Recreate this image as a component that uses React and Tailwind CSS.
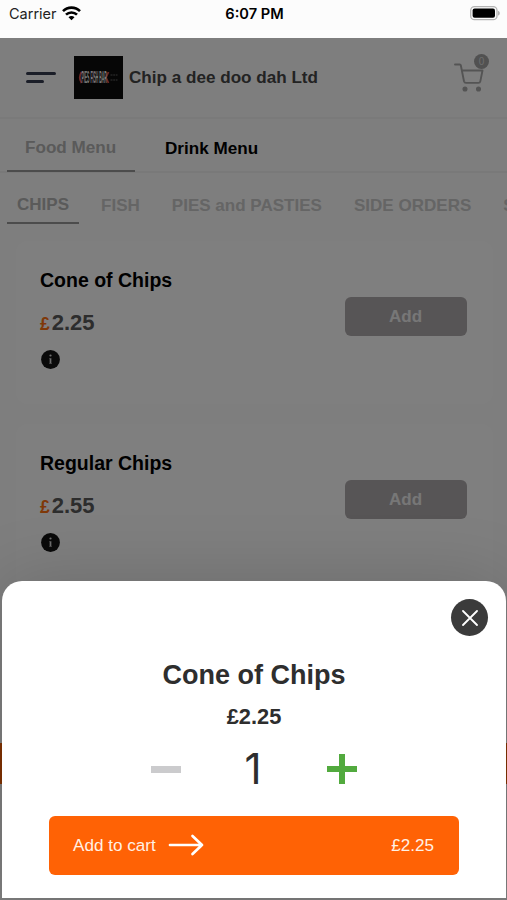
import React, { useState } from 'react';

const CATEGORIES = ['FISH', 'PIES and PASTIES', 'SIDE ORDERS', 'SAUCES'];

const PRODUCTS = [
  { id: 1, name: 'Cone of Chips', price: '2.25' },
  { id: 2, name: 'Regular Chips', price: '2.55' },
];

const StatusBar = () => (
  <div className="h-[38px] shrink-0 bg-[#fcfcfc] grid grid-cols-3 items-start pt-[5px] pl-[9px] pr-[7px] font-['Inter',sans-serif] text-black leading-[18px]">
    <div className="flex items-center gap-[5px] text-[14.5px] text-[#222]">
      Carrier
      <svg className="-mt-[2px]" width="19" height="15" viewBox="0 0 19 15" fill="none" stroke="#000" strokeWidth="2.6">
        <path d="M1 5.2a12 12 0 0 1 17 0" />
        <path d="M4 8.7a7.8 7.8 0 0 1 11 0" />
        <path d="M9.5 14.2 6.5 11.2a4.2 4.2 0 0 1 6 0z" fill="#000" stroke="none" />
      </svg>
    </div>
    <div className="text-center text-[14.6px] font-semibold whitespace-nowrap">6:07 PM</div>
    <div className="flex justify-end pt-px">
      <svg width="30" height="15" viewBox="0 0 30 15">
        <rect x="0.7" y="0.7" width="26.3" height="13" rx="3.8" fill="#fcfcfc" stroke="#b4b4b4" strokeWidth="1.3" />
        <rect x="2.6" y="2.6" width="22.4" height="9.2" rx="2" fill="#000" />
        <path d="M28 4.8c2.4.7 2.4 4.1 0 4.8z" fill="#b4b4b4" />
      </svg>
    </div>
  </div>
);

const ShopLogo = () => (
  <div className="ml-[18px] w-[49px] h-[43px] bg-[#0c0c0c] flex items-center justify-center">
    <svg width="43" height="20" viewBox="0 0 43 20">
      <path d="M4.5 4Q1 9.500 4.5 15M31.500 4l-2.500 5.500 2.500 5.500" fill="none" stroke="#e0524c" strokeWidth="1.8" />
      <g transform="translate(4.5 15) scale(0.205 1)">
        <text fill="#f4f4f4" fontFamily="Liberation Sans, sans-serif" fontWeight="700" fontSize="17">
          PIES FISH BAR
        </text>
      </g>
      <path d="M33.500 7h7M33.500 12h7" stroke="#484848" strokeWidth="1.4" strokeDasharray="2 .7" />
    </svg>
  </div>
);

const CartIcon = () => (
  <div className="relative w-[38px] h-[42px]">
    <svg className="absolute left-[2px] top-[9px]" width="30" height="31" viewBox="0 0 30 31" fill="none" stroke="#a8a8a8" strokeWidth="1.9" strokeLinecap="round" strokeLinejoin="round">
      <path d="M1 1.500h4.800q.8 0 1 .8L10 18.200q.4 1.700 2 1.700h12.500q1.500 0 1.800-1.500L28.500 7.500H8" />
      <circle cx="11" cy="26" r="1.6" fill="#a8a8a8" />
      <circle cx="24.5" cy="26" r="1.6" fill="#a8a8a8" />
    </svg>
    <span className="absolute left-[22px] top-0 w-[15px] h-[15px] rounded-full bg-[#a2a2a2] text-[#dadada] text-[10px] leading-[16px] text-center">
      0
    </span>
  </div>
);

const Header = () => (
  <div className="h-[81px] shrink-0 flex items-center border-b-2 border-[#f5f5f5] pl-[26px] pr-[17px]">
    <div className="flex flex-col gap-[5px]">
      <span className="block w-[30px] h-[3px] rounded-full bg-[#363c50]" />
      <span className="block w-[18px] h-[3px] rounded-full bg-[#363c50]" />
    </div>
    <ShopLogo />
    <div className="ml-[6px] text-[17.1px] font-bold text-[#464646] whitespace-nowrap">
      Chip a dee doo dah Ltd
    </div>
    <div className="ml-auto pb-[5px]">
      <CartIcon />
    </div>
  </div>
);

const Tabs = () => (
  <>
    <div className="h-[54px] shrink-0 flex border-b-2 border-[#f2f2f2] px-[7px] text-[17.1px] leading-[20px] font-bold">
      <div className="w-[128px] h-[53px] border-b-2 border-[#999] pl-[18px] pt-[19px] text-[#b4b4b4]">Food Menu</div>
      <div className="pl-[30px] pt-[20px] text-black">Drink Menu</div>
    </div>
    <div className="h-[65px] shrink-0 flex items-start overflow-hidden pl-[7px] text-[17.05px] leading-[20px] font-bold text-[#cacaca] whitespace-nowrap">
      <div className="w-[72px] h-[51px] shrink-0 border-b-2 border-[#999] pl-[10px] pt-[22px] text-[#b4b4b4]">CHIPS</div>
      <div className="flex gap-[32px] pl-[22px] pt-[23px]">
        {CATEGORIES.map((name) => (
          <span key={name}>{name}</span>
        ))}
      </div>
    </div>
  </>
);

const ProductCard = ({ product }) => (
  <div className="h-[163px] shrink-0 rounded-xl bg-white flex items-center justify-between pl-[24px] pr-[26.5px]">
    <div className="h-full pt-[27px]">
      <div className="text-[19.5px] leading-[24px] font-bold text-black">{product.name}</div>
      <div className="mt-[18px] flex items-baseline font-bold leading-[26px]">
        <span className="text-[17.5px] text-[#ff7010]">£</span>
        <span className="ml-[2px] text-[22px] text-[#5a5a5a]">{product.price}</span>
      </div>
      <svg className="mt-[13px] ml-px" width="19" height="19" viewBox="0 0 19 19">
        <circle cx="9.5" cy="9.5" r="9.4" fill="#151515" />
        <path d="M9.5 8.2v5.6" fill="none" stroke="#dcdcdc" strokeWidth="1.7" />
        <path d="M8.2 8.5h1.3M8.2 13.5h2.8" fill="none" stroke="#8a8a8a" strokeWidth="0.8" />
        <circle cx="9.5" cy="5.5" r="1.1" fill="#dcdcdc" />
      </svg>
    </div>
    <button className="w-[122px] h-[39px] mb-[12px] rounded-md bg-[#aeaaac] text-[17px] font-bold text-[#efefef]">Add</button>
  </div>
);

const AddSheet = ({ product }) => {
  const [count, setCount] = useState(1);
  const total = (Number(product.price) * count).toFixed(2);

  return (
    <div className="absolute left-[2px] right-px top-[581px] bottom-[2px] rounded-t-[20px] bg-white shadow-[0_0_70px_rgba(0,0,0,0.16)] flex flex-col items-center text-[#2e2e2e]">
      <button aria-label="Close" className="self-end mt-[18px] mr-[18px] w-[37px] h-[37px] rounded-full bg-[#3b3b3b] flex items-center justify-center">
        <svg width="16" height="16" viewBox="0 0 16 16" stroke="#fff" strokeWidth="1.8" strokeLinecap="round">
          <path d="M1 1l14 14M15 1 1 15" />
        </svg>
      </button>
      <div className="mt-[23px] text-[27px] leading-[32px] font-bold">{product.name}</div>
      <div className="mt-[13px] text-[21.8px] leading-[26px] font-bold">£{product.price}</div>
      <div className="mt-[14px] w-[206px] h-[50px] flex items-center justify-between">
        <button aria-label="Remove one" onClick={() => setCount(Math.max(1, count - 1))}>
          <span className="block w-[30px] h-[7px] bg-[#cbcbcd]" />
        </button>
        <span className="pr-[2px] font-['Inter',sans-serif] text-[42px] leading-[50px]">{count}</span>
        <button aria-label="Add one" onClick={() => setCount(count + 1)}>
          <svg width="30" height="30" viewBox="0 0 30 30" fill="#52aa3e">
            <path d="M12 0h6v12h12v6H18v12h-6V18H0v-6h12z" />
          </svg>
        </button>
      </div>
      <button className="mt-[22px] w-[410px] h-[59px] rounded-md bg-[#ff6205] flex items-center pl-[24px] pr-[25px] text-[17.1px] text-[#fff1e6]">
        Add to cart
        <svg className="ml-[12px] -mt-px" width="36" height="22" viewBox="0 0 36 22" fill="none" stroke="#fff" strokeWidth="2.7" strokeLinecap="round" strokeLinejoin="round">
          <path d="M2 11h32M24.5 2l9.5 9-9.5 9" />
        </svg>
        <span className="ml-auto">£{total}</span>
      </button>
    </div>
  );
};

export default function App() {
  return (
    <div className="relative w-[507px] h-[900px] overflow-hidden flex flex-col bg-[#fdfdfd] font-['Liberation_Sans',Arial,sans-serif]">
      <StatusBar />
      <Header />
      <Tabs />
      <div className="flex-1 min-h-0 flex flex-col gap-[20px] pt-[3px] pl-[16px] pr-[14px] overflow-hidden">
        {PRODUCTS.map((product) => (
          <ProductCard key={product.id} product={product} />
        ))}
      </div>
      {/* bottom basket bar, mostly hidden behind the sheet */}
      <div className="absolute left-0 right-0 top-[743px] h-[41px] bg-[#ff6205]" />
      <div className="absolute inset-x-0 top-[38px] bottom-0 bg-black/50" />
      <AddSheet product={PRODUCTS[0]} />
    </div>
  );
}
